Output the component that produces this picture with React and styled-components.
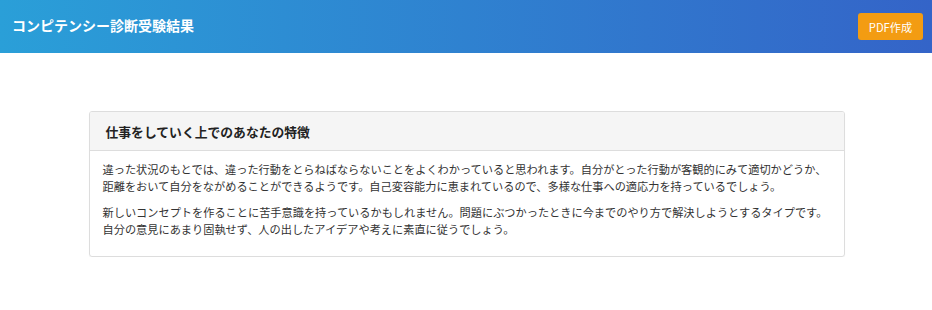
import React from 'react'
import styled, { createGlobalStyle } from 'styled-components'

const GlobalStyle = createGlobalStyle`
  body {
    margin: 0;
    background: #fff;
    font-family: "Noto Sans CJK JP", "Noto Sans", sans-serif;
    color: #333;
  }
`

const paragraphs = [
  '違った状況のもとでは、違った行動をとらねばならないことをよくわかっていると思われます。自分がとった行動が客観的にみて適切かどうか、距離をおいて自分をながめることができるようです。自己変容能力に恵まれているので、多様な仕事への適応力を持っているでしょう。',
  '新しいコンセプトを作ることに苦手意識を持っているかもしれません。問題にぶつかったときに今までのやり方で解決しようとするタイプです。自分の意見にあまり固執せず、人の出したアイデアや考えに素直に従うでしょう。',
]

const App = () => {
  return (
    <>
      <GlobalStyle />
      <Header>
        <Title>コンピテンシー診断受験結果</Title>
        <PdfButton type='button'>PDF作成</PdfButton>
      </Header>
      <Main>
        <Panel>
          <PanelHeading>仕事をしていく上でのあなたの特徴</PanelHeading>
          <PanelBody>
            {paragraphs.map((p, i) => (
              <Text key={i}>{p}</Text>
            ))}
          </PanelBody>
        </Panel>
      </Main>
    </>
  )
}

export default App

const Header = styled.header`
  height: 53px;
  display: flex;
  align-items: center;
  justify-content: space-between;
  padding: 0 9px 0 12px;
  box-sizing: border-box;
  background: linear-gradient(to right, #2a9fd8, #3464c8);
`

const Title = styled.h1`
  margin: 0 0 3px;
  font-size: 14px;
  font-weight: bold;
  color: #fff;
`

const PdfButton = styled.button`
  width: 65px;
  height: 27px;
  padding: 0;
  border: none;
  border-radius: 3px;
  background: #f39c12;
  color: #fff;
  font-family: "Noto Sans CJK JP", "Noto Sans", sans-serif;
  font-size: 11.2px;
  cursor: pointer;
`

const Main = styled.main`
  padding: 58px 0 0 1px;
  display: flex;
  justify-content: center;
`

const Panel = styled.section`
  width: 756px;
  border: 1px solid #ddd;
  border-radius: 3px;
  box-shadow: 0 1px 1px rgba(0, 0, 0, 0.05);
  box-sizing: border-box;
  overflow: hidden;
`

const PanelHeading = styled.h2`
  margin: 0;
  height: 38px;
  display: flex;
  align-items: center;
  padding: 0 16px;
  background: #f5f5f5;
  border-bottom: 1px solid #ddd;
  font-size: 12.8px;
  font-weight: bold;
  color: #222;
`

const PanelBody = styled.div`
  padding: 10px 13px 9px;
`

const Text = styled.p`
  margin: 0 0 9px;
  font-size: 11.2px;
  line-height: 17px;
  color: #333;
`
